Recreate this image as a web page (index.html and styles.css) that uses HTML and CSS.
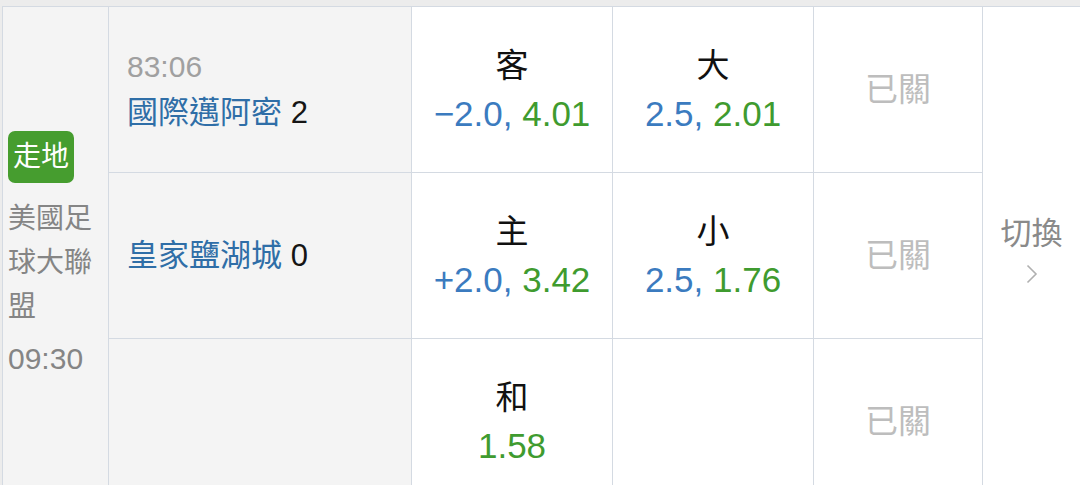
FILE: index.html
```html
<!DOCTYPE html>
<html lang="zh-Hant">
<head>
  <meta charset="UTF-8" />
  <meta name="viewport" content="width=device-width, initial-scale=1.0" />
  <title>走地 - 美國足球大聯盟</title>
  <link rel="stylesheet" href="styles.css">
</head>
<body>
  <div class="board">
    <!-- 聯賽資訊 -->
    <div class="league">
      <span class="badge">走地</span>
      <div class="league-name">美國足球大聯盟</div>
      <div class="kickoff">09:30</div>
    </div>

    <!-- 第一行：客隊 -->
    <div class="team">
      <div class="clock">83:06</div>
      <div><span class="team-name">國際邁阿密</span> <span class="score">2</span></div>
    </div>
    <div class="odds">
      <div class="label">客</div>
      <div><span class="line">−2.0,</span> <span class="price">4.01</span></div>
    </div>
    <div class="odds">
      <div class="label">大</div>
      <div><span class="line">2.5,</span> <span class="price">2.01</span></div>
    </div>
    <div class="odds closed">已關</div>

    <div class="switch">
      <div>切換</div>
      <svg class="chevron" width="12" height="20" viewBox="0 0 12 20">
        <polyline points="1.5,1.5 10,10 1.5,18.5" fill="none" stroke="#b0b0b0" stroke-width="1.6" />
      </svg>
    </div>

    <!-- 第二行：主隊 -->
    <div class="team">
      <div><span class="team-name">皇家鹽湖城</span> <span class="score">0</span></div>
    </div>
    <div class="odds">
      <div class="label">主</div>
      <div><span class="line">+2.0,</span> <span class="price">3.42</span></div>
    </div>
    <div class="odds">
      <div class="label">小</div>
      <div><span class="line">2.5,</span> <span class="price">1.76</span></div>
    </div>
    <div class="odds closed">已關</div>

    <!-- 第三行：和局 -->
    <div class="team"></div>
    <div class="odds">
      <div class="label">和</div>
      <div><span class="price">1.58</span></div>
    </div>
    <div class="odds"></div>
    <div class="odds closed">已關</div>
  </div>
</body>
</html>
```

FILE: styles.css
```css
body { margin: 0; background: #ececec; font-family: "Liberation Sans", "Noto Sans CJK TC", sans-serif; overflow: hidden; }

.board { display: grid; grid-template-columns: 105px 302px 200px 200px 168px 97px; grid-template-rows: 165px 165px 165px; gap: 1px; padding: 1px 0 0 1px; margin: 6px 0 0 2px; background: #d4dae2; }

.league { grid-row: span 3; background: #f4f4f4; padding-left: 5px; display: flex; flex-direction: column; justify-content: center; align-items: flex-start; color: #858585; }
.badge { display: block; width: 66px; height: 52px; line-height: 52px; text-align: center; background: #469d2f; color: #fff; border-radius: 7px; font-size: 28px; margin-bottom: 14px; }
.league-name { width: 90px; font-size: 28px; line-height: 44px; }
.kickoff { font-size: 30px; line-height: 44px; margin-top: 8px; }

.team { background: #f4f4f4; padding-left: 18px; display: flex; flex-direction: column; justify-content: center; font-size: 31px; line-height: 46px; }
.clock { color: #a0a0a0; font-size: 30px; }
.team-name { color: #2f6ea7; }
.score { color: #151515; }

.odds { background: #fff; display: flex; flex-direction: column; justify-content: center; align-items: center; font-size: 35px; line-height: 48px; }
.odds .label { color: #111; font-size: 33px; }
.line { color: #3b7bbf; }
.price { color: #3f9b2f; }
.odds.closed { color: #bdbdbd; font-size: 33px; }

.switch { grid-row: span 3; background: #fff; display: flex; flex-direction: column; justify-content: center; align-items: center; color: #8a8a8a; font-size: 31px; line-height: 40px; padding-bottom: 14px; }
.chevron { margin-top: 10px; }
```
